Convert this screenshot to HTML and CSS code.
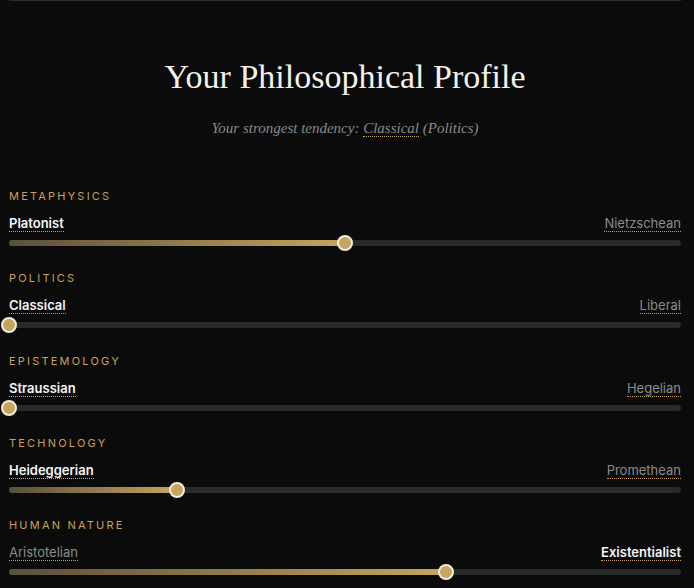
FILE: index.html
```html
<!DOCTYPE html>
<html lang="en">
<head>
<meta charset="utf-8">
<title>Your Philosophical Profile</title>
<link rel="stylesheet" href="styles.css">
</head>
<body>
<main class="page">
  <header class="head">
    <h1 class="title">Your Philosophical Profile</h1>
    <p class="sub">Your strongest tendency: <span class="hl">Classical</span> (Politics)</p>
  </header>

  <section class="axis">
    <div class="cat">Metaphysics</div>
    <div class="ends"><span class="end on">Platonist</span><span class="end">Nietzschean</span></div>
    <div class="track"><div class="fill" style="width:50%"></div><div class="knob" style="left:50%"></div></div>
  </section>

  <section class="axis">
    <div class="cat">Politics</div>
    <div class="ends"><span class="end on">Classical</span><span class="end">Liberal</span></div>
    <div class="track"><div class="fill" style="width:0%"></div><div class="knob" style="left:0%"></div></div>
  </section>

  <section class="axis">
    <div class="cat">Epistemology</div>
    <div class="ends"><span class="end on">Straussian</span><span class="end">Hegelian</span></div>
    <div class="track"><div class="fill" style="width:0%"></div><div class="knob" style="left:0%"></div></div>
  </section>

  <section class="axis">
    <div class="cat">Technology</div>
    <div class="ends"><span class="end on">Heideggerian</span><span class="end">Promethean</span></div>
    <div class="track"><div class="fill" style="width:25%"></div><div class="knob" style="left:25%"></div></div>
  </section>

  <section class="axis">
    <div class="cat">Human Nature</div>
    <div class="ends"><span class="end">Aristotelian</span><span class="end on">Existentialist</span></div>
    <div class="track"><div class="fill" style="width:65%"></div><div class="knob" style="left:65%"></div></div>
  </section>
</main>
</body>
</html>
```

FILE: styles.css
```css
html, body {
  margin: 0;
  padding: 0;
  background: #0b0b0b;
}
body {
  font-family: Inter, "Liberation Sans", sans-serif;
  color: #e8e8e8;
}
.page {
  margin: 0 13px 0 9px;
  border-top: 1px solid #2c2c2c;
  padding-bottom: 12px;
}
.head {
  text-align: center;
  padding-top: 56px;
  margin-bottom: 51px;
}
.title {
  margin: 0;
  font-family: "Liberation Serif", "DejaVu Serif", serif;
  font-weight: 400;
  font-size: 34px;
  line-height: 40px;
  color: #f4f1ea;
}
.sub {
  margin: 21px 0 0;
  font-family: "Liberation Serif", "DejaVu Serif", serif;
  font-style: italic;
  font-size: 15px;
  line-height: 20px;
  color: #8a8a8a;
}
.hl {
  border-bottom: 1px dotted #c9a35a;
}
.axis {
  margin-bottom: 25.3px;
}
.axis:last-child {
  margin-bottom: 0;
}
.cat {
  font-size: 11px;
  line-height: 14px;
  letter-spacing: 2.2px;
  text-transform: uppercase;
  color: #c9a15a;
  margin-bottom: 12px;
}
.ends {
  display: flex;
  justify-content: space-between;
  font-size: 13px;
  line-height: 16px;
}
.end {
  color: #8b8b8b;
  border-bottom: 1px dotted #c9a35a;
}
.end.on {
  color: #f5f5f5;
  font-weight: 600;
}
.track {
  position: relative;
  margin-top: 8px;
  height: 6px;
  border-radius: 3px;
  background: #2a2a2a;
}
.fill {
  height: 100%;
  border-radius: 3px;
  background: linear-gradient(90deg, #5b4f3c 0%, #c6a65e 100%);
}
.knob {
  position: absolute;
  top: 50%;
  width: 12px;
  height: 12px;
  border: 2px solid #f3ecdc;
  border-radius: 50%;
  background: #c6a65e;
  transform: translate(-50%, -50%);
}
```
